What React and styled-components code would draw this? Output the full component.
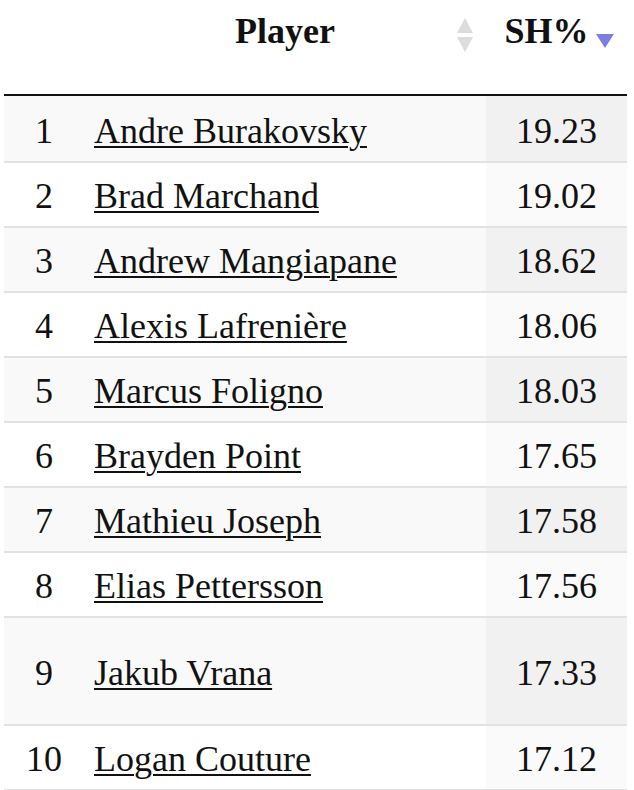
import styled, { createGlobalStyle } from 'styled-components';

const GlobalStyle = createGlobalStyle`
  body {
    margin: 0;
    background: #fff;
    font-family: "Liberation Serif", "Times New Roman", serif;
    color: #111;
  }
`;

const Wrapper = styled.div`
  padding-left: 4px;
  width: 623px;
`;

const Table = styled.table`
  width: 100%;
  border-collapse: collapse;
  table-layout: fixed;
  font-size: 36px;
  line-height: 40px;
`;

const HeadCell = styled.th`
  position: relative;
  font-weight: bold;
  text-align: center;
  vertical-align: top;
  padding: 11px ${({ $padRight }) => $padRight || 10}px 43px 10px;
  border-bottom: 2px solid #111;
`;

const SortPair = styled.span`
  position: absolute;
  right: 13px;
  top: 18px;
  display: flex;
  flex-direction: column;
  gap: 4px;
`;

const Arrow = styled.span`
  display: block;
  width: 0;
  height: 0;
  border-left: ${({ $w }) => $w / 2}px solid transparent;
  border-right: ${({ $w }) => $w / 2}px solid transparent;
  ${({ $up, $h, $color }) => ($up
    ? `border-bottom: ${$h}px solid ${$color};`
    : `border-top: ${$h}px solid ${$color};`)}
`;

const SortDesc = styled.span`
  position: absolute;
  right: 13px;
  top: 34px;
`;

const Cell = styled.td`
  text-align: ${({ $align }) => $align || 'left'};
  vertical-align: middle;
  padding: 13px 10px 10px;
  height: ${({ $tall }) => ($tall ? 83 : 40)}px;
  background: ${({ $sorted, $odd }) => {
    if (!$sorted) return 'transparent';
    return $odd ? '#f1f1f1' : '#fafafa';
  }};
`;

const Row = styled.tr`
  background: ${({ $odd }) => ($odd ? '#f9f9f9' : '#fff')};
  border-top: 2px solid #e2e2e2;
  &:first-child {
    border-top: none;
  }
  &:first-child ${Cell} {
    padding-top: 15px;
  }
  &:last-child {
    border-bottom: 2px solid #e2e2e2;
  }
`;

const PlayerLink = styled.a`
  color: #111;
  text-decoration: underline;
  text-decoration-thickness: 2px;
  text-underline-offset: 3px;
`;

const players = [
  ['Andre Burakovsky', '19.23'],
  ['Brad Marchand', '19.02'],
  ['Andrew Mangiapane', '18.62'],
  ['Alexis Lafrenière', '18.06'],
  ['Marcus Foligno', '18.03'],
  ['Brayden Point', '17.65'],
  ['Mathieu Joseph', '17.58'],
  ['Elias Pettersson', '17.56'],
  ['Jakub Vrana', '17.33'],
  ['Logan Couture', '17.12'],
];

export default function App() {
  return (
    <Wrapper>
      <GlobalStyle />
      <Table>
        <colgroup>
          <col style={{ width: 80 }} />
          <col style={{ width: 402 }} />
          <col style={{ width: 141 }} />
        </colgroup>
        <thead>
          <tr>
            <HeadCell />
            <HeadCell>
              Player
              <SortPair>
                <Arrow $up $w={16} $h={15} $color="#dcdcdc" />
                <Arrow $w={16} $h={15} $color="#dcdcdc" />
              </SortPair>
            </HeadCell>
            <HeadCell $padRight={30}>
              SH%
              <SortDesc>
                <Arrow $w={18} $h={14} $color="#7b7fe4" />
              </SortDesc>
            </HeadCell>
          </tr>
        </thead>
        <tbody>
          {players.map(([name, pct], i) => {
            const odd = i % 2 === 0;
            const tall = name === 'Jakub Vrana';
            return (
              <Row key={name} $odd={odd}>
                <Cell $align="center" $tall={tall}>{i + 1}</Cell>
                <Cell $tall={tall}>
                  <PlayerLink href="#">{name}</PlayerLink>
                </Cell>
                <Cell $align="center" $sorted $odd={odd} $tall={tall}>{pct}</Cell>
              </Row>
            );
          })}
        </tbody>
      </Table>
    </Wrapper>
  );
}
